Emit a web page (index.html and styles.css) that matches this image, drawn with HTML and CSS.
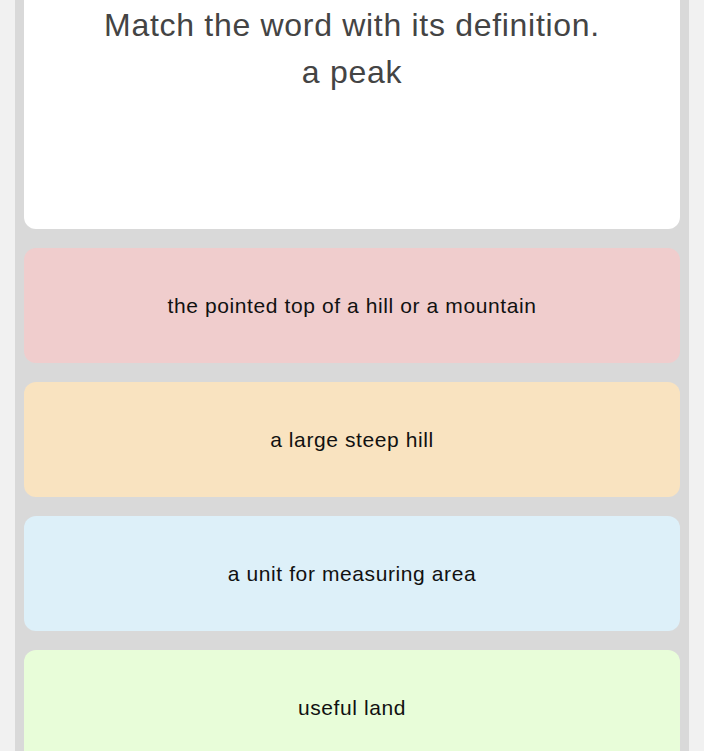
FILE: index.html
```html
<!DOCTYPE html>
<html lang="en">
<head>
    <meta charset="UTF-8">
    <meta name="viewport" content="width=device-width, initial-scale=1.0">
    <title>Match the word</title>
<link rel="stylesheet" href="styles.css">
</head>
<body>
    <div class="quiz">
        <div class="question">
            <p>Match the word with its definition.</p>
            <p>a peak</p>
        </div>
        <button class="answer pink">the pointed top of a hill or a mountain</button>
        <button class="answer orange">a large steep hill</button>
        <button class="answer blue">a unit for measuring area</button>
        <button class="answer green">useful land</button>
    </div>
</body>
</html>
```

FILE: styles.css
```css
body {
  background-color: #f1f1f1;
  font-family: "Liberation Sans", Arial, sans-serif;
  margin: 0;
  padding: 0 15px;
  overflow: hidden;
}

.quiz {
  background: #d9d9d9;
  margin-top: -40px;
  padding: 0 9px 20px 9px;
  display: flex;
  flex-direction: column;
  gap: 19px;
}

.question {
  background: #fff;
  border-radius: 0 0 12px 12px;
  height: 269px;
  padding-top: 42px;
  box-sizing: border-box;
  text-align: center;
  color: #444;
  font-size: 32px;
  letter-spacing: 0.7px;
}

.question p {
  margin: 0;
  line-height: 47px;
}

.answer {
  border: none;
  border-radius: 12px;
  height: 115px;
  font-family: inherit;
  font-size: 21px;
  letter-spacing: 0.6px;
  color: #111;
  text-align: center;
  padding: 0;
}

.pink {
  background: #f0cdcd;
}

.orange {
  background: #f9e3c0;
}

.blue {
  background: #ddf0f9;
}

.green {
  background: #e8fdd9;
}
```
